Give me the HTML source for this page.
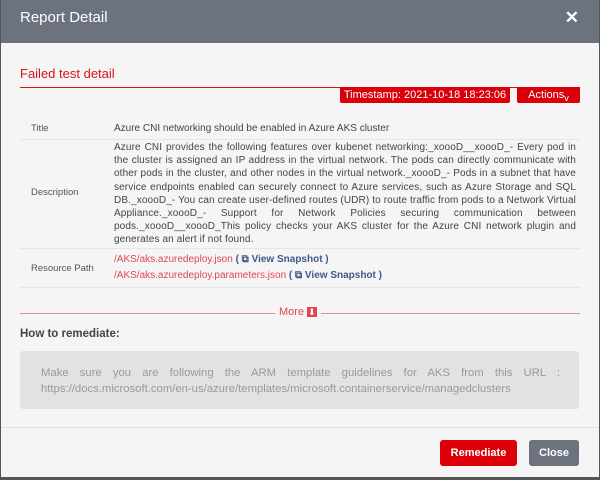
<!DOCTYPE html>
<html><head><style>
body{margin:0;width:600px;height:480px;background:#555;font-family:"Liberation Sans",sans-serif;overflow:hidden;position:relative}
.m{position:absolute;left:1px;top:0;width:598px;height:477px;background:#f5f5f5}
.h{height:43px;background:#6c737e;color:#fff;font-size:15px;line-height:36px;padding-left:19px;position:relative}
.x{position:absolute;right:20px;top:0;font-size:17px;font-weight:bold}
.ft{position:absolute;left:19px;top:66px;color:#d9131b;font-size:13px}
.ln{position:absolute;left:19px;top:87px;width:560px;height:1px;background:#d9131b}
.ts{position:absolute;top:87px;height:16px;background:#d9000a;color:#fff;font-size:11px;line-height:16px;text-align:center;border-radius:0 0 2px 2px}
.row{position:absolute;left:19px;width:560px;border-bottom:1px solid #e6e6e6;font-size:10px;color:#444}
.lab{position:absolute;left:11px;color:#555;font-size:9.5px}
.val{position:absolute;left:94px;width:462px}
.d{text-align:justify;line-height:13.2px;letter-spacing:0.12px}
.r{color:#e0474c}.v{color:#3c5a8a;font-weight:bold}
.more{position:absolute;top:313px;left:19px;width:560px;height:1px;background:#e88}
.mt{position:absolute;top:306px;left:274px;background:#f5f5f5;padding:0 4px;color:#e0474c;font-size:11px}
.hr{position:absolute;left:19px;top:328px;font-weight:bold;font-size:11.5px;color:#444}
.box{position:absolute;left:19px;top:351px;width:519px;background:#e2e2e2;border-radius:3px;padding:14px 19px 0 21px;color:#999;font-size:11.3px;line-height:16px;text-align:justify;height:44px}
.ff{position:absolute;left:0;top:427px;width:598px;height:1px;background:#e2e2e2}
.btn{position:absolute;top:440px;height:26px;color:#fff;font-weight:bold;font-size:11px;line-height:26px;text-align:center;border-radius:3px}
</style></head><body>
<div class="m">
<div class="h">Report Detail<span class="x">✕</span></div>
<div class="ft">Failed test detail</div>
<div class="ln"></div>
<div class="ts" style="left:339px;width:170px">Timestamp: 2021-10-18 18:23:06</div>
<div class="ts" style="left:516px;width:63px">Actions<sub>v</sub></div>
<div class="row" style="top:118px;height:21px"><span class="lab" style="top:5px">Title</span><span class="val" style="top:5px">Azure CNI networking should be enabled in Azure AKS cluster</span></div>
<div class="row" style="top:140px;height:108px"><span class="lab" style="top:47px">Description</span><div class="val d" style="top:1px">Azure CNI provides the following features over kubenet networking:_xoooD__xoooD_- Every pod in the cluster is assigned an IP address in the virtual network. The pods can directly communicate with other pods in the cluster, and other nodes in the virtual network._xoooD_- Pods in a subnet that have service endpoints enabled can securely connect to Azure services, such as Azure Storage and SQL DB._xoooD_- You can create user-defined routes (UDR) to route traffic from pods to a Network Virtual Appliance._xoooD_- Support for Network Policies securing communication between pods._xoooD__xoooD_This policy checks your AKS cluster for the Azure CNI network plugin and generates an alert if not found.</div></div>
<div class="row" style="top:249px;height:38px"><span class="lab" style="top:14px">Resource Path</span><div class="val" style="top:3px;line-height:16px;font-size:10px"><span class="r">/AKS/aks.azuredeploy.json</span> <span class="v">( ⧉ View Snapshot )</span><br><span class="r">/AKS/aks.azuredeploy.parameters.json</span> <span class="v">( ⧉ View Snapshot )</span></div></div>
<div class="more"></div><div class="mt">More <span style="background:#e0474c;color:#fff;font-size:9px;padding:0 1px">⬇</span></div>
<div class="hr">How to remediate:</div>
<div class="box">Make sure you are following the ARM template guidelines for AKS from this URL : https://docs.microsoft.com/en-us/azure/templates/microsoft.containerservice/managedclusters</div>
<div class="ff"></div>
<div class="btn" style="left:439px;width:77px;background:#dd0008">Remediate</div>
<div class="btn" style="left:528px;width:50px;background:#6c737e">Close</div>
</div>
</body></html>
